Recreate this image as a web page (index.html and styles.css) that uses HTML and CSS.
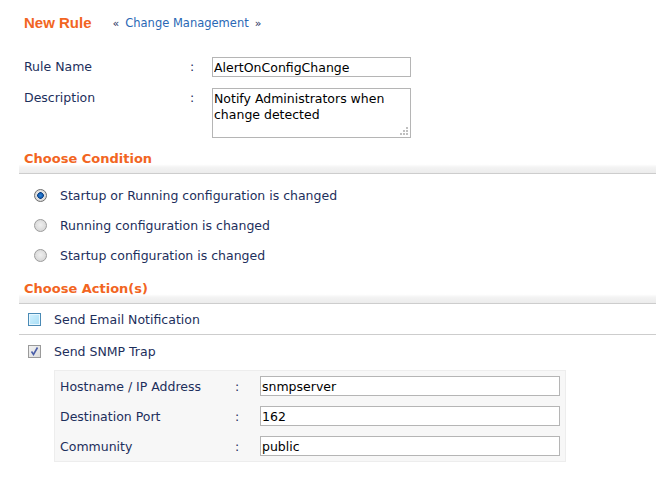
FILE: index.html
```html
<!DOCTYPE html>
<html lang="en">
<head>
  <meta charset="UTF-8">
  <title>New Rule</title>
  <link rel="stylesheet" href="styles.css">
</head>
<body>
  <div class="page">
    <div class="header">
      <h1>New Rule</h1>
      <span class="crumb"><span class="arr">&laquo;</span><a href="#">Change Management</a><span class="arr">&raquo;</span></span>
    </div>

    <div class="form-grid">
      <label class="lbl mid" for="rule-name">Rule Name</label>
      <span class="colon mid">:</span>
      <input type="text" id="rule-name" class="text" value="AlertOnConfigChange">

      <label class="lbl top" for="desc">Description</label>
      <span class="colon top">:</span>
      <div class="area-wrap">
        <textarea id="desc" class="area">Notify Administrators when change detected</textarea>
        <svg class="grip" width="9" height="9" viewBox="0 0 9 9">
          <rect x="7" y="1" width="2" height="2" fill="#c0c0c0"/>
          <rect x="4" y="4" width="2" height="2" fill="#c0c0c0"/>
          <rect x="7" y="4" width="2" height="2" fill="#c0c0c0"/>
          <rect x="1" y="7" width="2" height="2" fill="#c0c0c0"/>
          <rect x="4" y="7" width="2" height="2" fill="#c0c0c0"/>
          <rect x="7" y="7" width="2" height="2" fill="#c0c0c0"/>
        </svg>
      </div>
    </div>

    <h2 class="section">Choose Condition</h2>
    <div class="options">
      <label class="option"><input type="radio" name="cond" class="radio" checked> Startup or Running configuration is changed</label>
      <label class="option"><input type="radio" name="cond" class="radio"> Running configuration is changed</label>
      <label class="option"><input type="radio" name="cond" class="radio"> Startup configuration is changed</label>
    </div>

    <h2 class="section section-2">Choose Action(s)</h2>
    <div class="actions">
      <div class="action email">
        <span class="check"></span>
        <span>Send Email Notification</span>
      </div>
      <div class="action snmp">
        <span class="check checked">
          <svg width="11" height="11" viewBox="0 0 11 11"><path d="M2.5 5.5 L4.5 8.5 L8.5 1.5" fill="none" stroke="#4a5ea8" stroke-width="1.6"/></svg>
        </span>
        <span>Send SNMP Trap</span>
      </div>
      <div class="snmp-panel">
        <div class="panel-row">
          <span class="plbl">Hostname / IP Address</span>
          <span class="pcolon">:</span>
          <input type="text" class="text ptext" value="snmpserver">
        </div>
        <div class="panel-row">
          <span class="plbl">Destination Port</span>
          <span class="pcolon">:</span>
          <input type="text" class="text ptext" value="162">
        </div>
        <div class="panel-row">
          <span class="plbl">Community</span>
          <span class="pcolon">:</span>
          <input type="text" class="text ptext" value="public">
        </div>
      </div>
    </div>
  </div>
</body>
</html>
```

FILE: styles.css
```css
body {
  margin: 0;
  background: #fff;
  font-family: "DejaVu Sans", Verdana, sans-serif;
  font-size: 12.5px;
  color: #1d2f5c;
}
.page {
  padding-top: 14px;
}
.header {
  display: flex;
  align-items: center;
  height: 18px;
  padding-left: 24px;
}
h1 {
  margin: 0;
  font-family: "Liberation Sans", Arial, sans-serif;
  font-size: 15px;
  font-weight: bold;
  color: #f26522;
  line-height: 18px;
}
.crumb {
  display: flex;
  align-items: center;
  margin-left: 21px;
  font-size: 11.5px;
  color: #1d2f5c;
}
.arr {
  font-size: 11px;
}
.crumb a {
  margin: 0 6px;
  color: #2a68b5;
  text-decoration: none;
}
.form-grid {
  display: grid;
  grid-template-columns: 166px 22px 199px;
  row-gap: 11px;
  margin-top: 25px;
  padding-left: 24px;
}
.lbl, .colon {
  line-height: 16px;
}
.mid {
  line-height: 20px;
}
.top {
  padding-top: 2px;
}
.text {
  box-sizing: border-box;
  width: 100%;
  height: 20px;
  margin: 0;
  padding: 0 1px;
  border: 1px solid #b5b5b5;
  font-family: "DejaVu Sans", Verdana, sans-serif;
  font-size: 12.5px;
  color: #000;
  outline: none;
}
.area-wrap {
  position: relative;
  height: 50px;
}
.area {
  box-sizing: border-box;
  width: 100%;
  height: 50px;
  margin: 0;
  padding: 2px 1px;
  border: 1px solid #b5b5b5;
  font-family: "DejaVu Sans", Verdana, sans-serif;
  font-size: 12.5px;
  line-height: 16px;
  color: #000;
  resize: none;
  outline: none;
  overflow: hidden;
  display: block;
}
.grip {
  position: absolute;
  right: 3px;
  bottom: 3px;
}
.section {
  margin: 12px 0 0 19px;
  padding: 1px 0 6px 5px;
  font-size: 13px;
  font-weight: bold;
  line-height: 16px;
  color: #f26522;
  background: linear-gradient(to bottom, #fff 0, #fff 62%, #f3f3f3 75%, #ececec 100%);
  border-bottom: 1px solid #cdcdcd;
}
.section-2 {
  margin-top: 10px;
}
.options {
  margin-top: 6px;
}
.option {
  display: flex;
  align-items: center;
  height: 30px;
  padding-left: 34px;
}
.radio {
  appearance: none;
  -webkit-appearance: none;
  width: 13px;
  height: 13px;
  margin: 0 13px 0 0;
  border-radius: 50%;
  border: 1px solid #9c9c9c;
  background: radial-gradient(circle at 50% 45%, #f0f0f0 0, #cfcfcf 100%);
}
.radio:checked {
  border-color: #6e6e6e;
  background:
    radial-gradient(circle at 50% 50%, #2f86d8 0, #1763b8 2px, #0b3d80 3px, transparent 3.6px),
    radial-gradient(circle at 50% 45%, #f0f0f0 0, #d0d0d0 100%);
}
.actions {
  margin-left: 19px;
}
.action {
  display: flex;
  align-items: center;
  padding-left: 9px;
}
.email {
  height: 30px;
  border-bottom: 1px solid #cdcdcd;
}
.snmp {
  height: 32px;
}
.check {
  box-sizing: border-box;
  display: flex;
  align-items: center;
  justify-content: center;
  width: 13px;
  height: 13px;
  margin-right: 13px;
  border: 1px solid #4a8ab5;
  background: linear-gradient(135deg, #d2f1ff 0, #a6ddf5 100%);
  box-shadow: inset 0 0 0 1px #e6f7ff;
}
.check.checked {
  border-color: #9a9a9a;
  background: linear-gradient(135deg, #f2f2f2 0, #dcdcdc 100%);
  box-shadow: none;
}
.snmp-panel {
  width: 512px;
  box-sizing: border-box;
  margin: 3px 0 0 35px;
  padding: 0 5px;
  background: #f7f7f7;
  border: 1px solid #ededed;
}
.panel-row {
  display: flex;
  align-items: center;
  height: 30px;
}
.plbl {
  width: 175px;
}
.pcolon {
  width: 25px;
}
.ptext {
  width: 300px;
}
```
